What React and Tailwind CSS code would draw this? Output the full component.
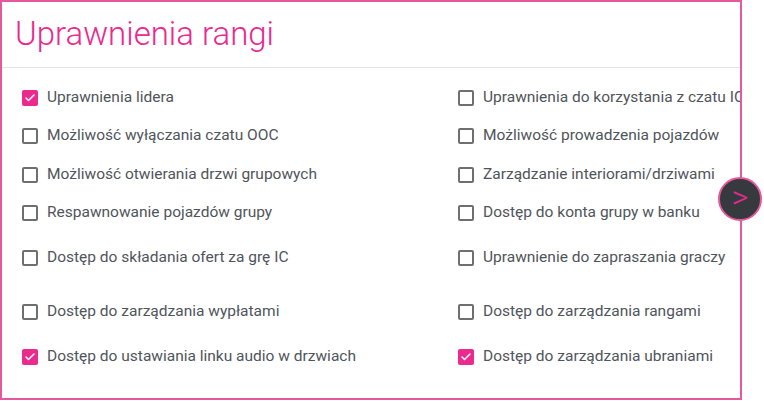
import { Check } from 'lucide-react';

const rows = [
  { h: 'h-[38px]', left: ['Uprawnienia lidera', true], right: ['Uprawnienia do korzystania z czatu IC', false] },
  { h: 'h-[37px]', left: ['Możliwość wyłączania czatu OOC', false], right: ['Możliwość prowadzenia pojazdów', false] },
  { h: 'h-[42px]', left: ['Możliwość otwierania drzwi grupowych', false], right: ['Zarządzanie interiorami/drziwami', false] },
  { h: 'h-[34px]', left: ['Respawnowanie pojazdów grupy', false], right: ['Dostęp do konta grupy w banku', false] },
  { h: 'h-[56px]', left: ['Dostęp do składania ofert za grę IC', false], right: ['Uprawnienie do zapraszania graczy', false] },
  { h: 'h-[52px]', left: ['Dostęp do zarządzania wypłatami', false], right: ['Dostęp do zarządzania rangami', false] },
  { h: 'h-[38px]', left: ['Dostęp do ustawiania linku audio w drzwiach', true], right: ['Dostęp do zarządzania ubraniami', true] },
];

function Box({ label, checked }) {
  return (
    <div className="flex items-center gap-[9px] whitespace-nowrap">
      {checked ? (
        <span className="w-[16px] h-[16px] rounded-[2px] bg-[#ea2a8e] flex items-center justify-center shrink-0">
          <Check size={12} strokeWidth={3} className="text-white" />
        </span>
      ) : (
        <span className="w-[16px] h-[16px] rounded-[2px] border-2 border-[#6f6f6f] shrink-0" />
      )}
      <span className="text-[15.5px] text-[#50555b]">{label}</span>
    </div>
  );
}

export default function App() {
  return (
    <div className="w-[764px] h-[401px] bg-white relative" style={{ fontFamily: 'Roboto, "Liberation Sans", sans-serif' }}>
      <div className="w-[742px] h-[400px] border-2 border-[#e6579b] overflow-hidden flex flex-col">
        <div className="h-[66px] pl-[13px] flex items-center border-b border-[#e4e4e4] shrink-0">
          <h1 className="text-[33px] font-light text-[#ea2a8e] leading-none pb-[2px]">Uprawnienia rangi</h1>
        </div>
        <div className="pt-[11px] pl-[20px]">
          {rows.map((r, i) => (
            <div key={i} className={`grid grid-cols-[436px_1fr] items-center ${r.h}`}>
              <Box label={r.left[0]} checked={r.left[1]} />
              <Box label={r.right[0]} checked={r.right[1]} />
            </div>
          ))}
        </div>
      </div>
      <button className="absolute left-[718px] top-[177px] w-[44px] h-[44px] rounded-full bg-[#363a3f] border-2 border-[#e6579b] flex items-center justify-center text-[#ea2a8e] text-[32px] font-light leading-none pb-[4px]">
        &gt;
      </button>
    </div>
  );
}
